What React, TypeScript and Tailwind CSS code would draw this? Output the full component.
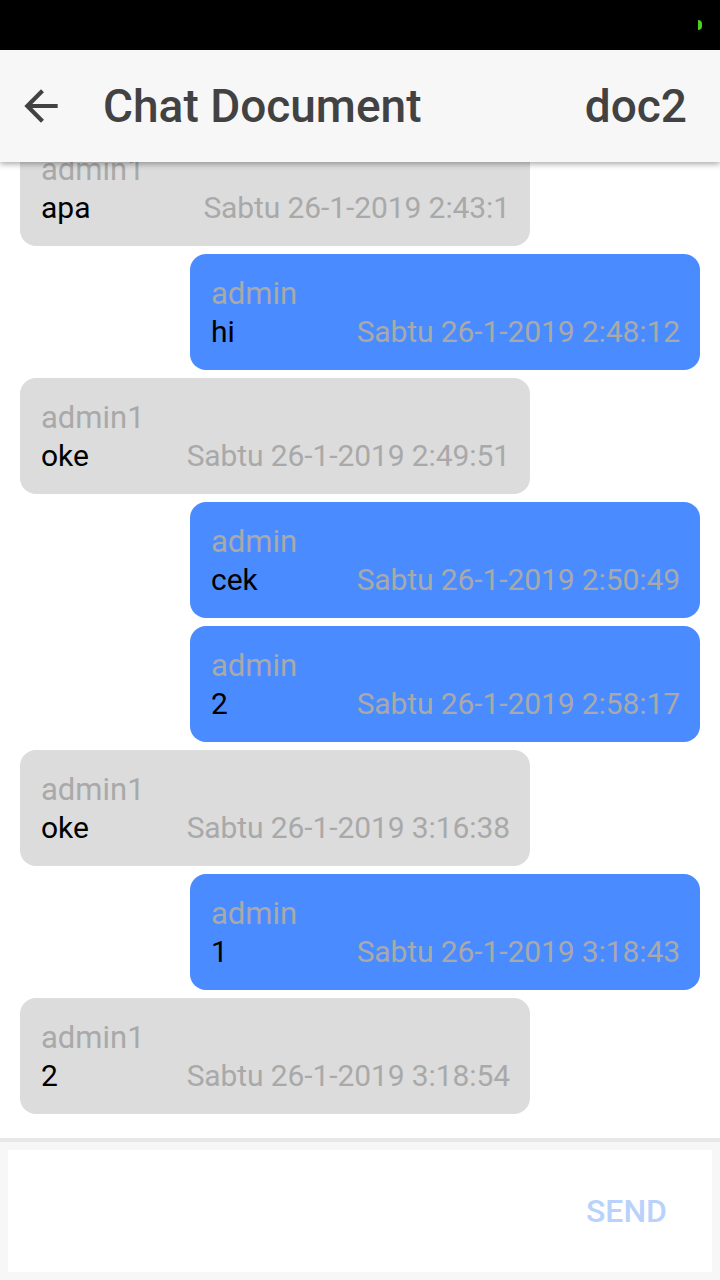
import React from "react";

type Msg = { from: string; text: string; time: string; mine: boolean };

const messages: Msg[] = [
  { from: "admin1", text: "apa", time: "Sabtu 26-1-2019 2:43:1", mine: false },
  { from: "admin", text: "hi", time: "Sabtu 26-1-2019 2:48:12", mine: true },
  { from: "admin1", text: "oke", time: "Sabtu 26-1-2019 2:49:51", mine: false },
  { from: "admin", text: "cek", time: "Sabtu 26-1-2019 2:50:49", mine: true },
  { from: "admin", text: "2", time: "Sabtu 26-1-2019 2:58:17", mine: true },
  { from: "admin1", text: "oke", time: "Sabtu 26-1-2019 3:16:38", mine: false },
  { from: "admin", text: "1", time: "Sabtu 26-1-2019 3:18:43", mine: true },
  { from: "admin1", text: "2", time: "Sabtu 26-1-2019 3:18:54", mine: false },
];

function Bubble({ m }: { m: Msg }) {
  return (
    <div className={"flex " + (m.mine ? "justify-end" : "justify-start")}>
      <div
        className={
          "w-[510px] h-[116px] shrink-0 rounded-[16px] pl-[21px] pr-[20px] pt-[21px] text-[30px] leading-[38px] " +
          (m.mine ? "bg-[#4a8cff]" : "bg-[#dcdcdc]")
        }
      >
        <div className="text-[#a9a9a9] text-[31px]">{m.from}</div>
        <div className="flex justify-between items-baseline">
          <span className="text-black">{m.text}</span>
          <span className="text-[#a9a9a9] tracking-[-0.1px]">{m.time}</span>
        </div>
      </div>
    </div>
  );
}

export default function App() {
  return (
    <div
      className="w-[720px] h-[1280px] flex flex-col bg-white overflow-hidden"
      style={{ fontFamily: "Roboto, 'Noto Sans', sans-serif" }}
    >
      <div className="h-[50px] bg-black flex items-center justify-end pr-[18px] shrink-0">
        <div className="w-[4px] h-[10px] rounded-r-full bg-[#4cd01c]" />
      </div>

      <div className="relative z-10 h-[112px] shrink-0 bg-[#f7f7f7] shadow-[0_2px_6px_rgba(0,0,0,0.35)] flex items-center pl-[16px] pr-[33px]">
        <svg width="50" height="50" viewBox="0 0 24 24" className="text-[#424242]">
          <path
            d="M20 11H7.83l5.59-5.59L12 4l-8 8 8 8 1.41-1.41L7.83 13H20v-2z"
            fill="currentColor"
          />
        </svg>
        <div className="ml-[37px] text-[46px] font-medium text-[#424242]">Chat Document</div>
        <div className="ml-auto text-[46px] font-medium text-[#424242]">doc2</div>
      </div>

      <div className="flex-1 min-h-0 overflow-hidden flex flex-col justify-end gap-[8px] px-[20px] pb-[24px]">
        {messages.map((m, i) => (
          <Bubble key={i} m={m} />
        ))}
      </div>

      <div className="h-[4px] bg-[#e8e8e8] shrink-0" />
      <div className="h-[138px] shrink-0 bg-[#f7f7f7] p-[8px]">
        <div className="h-full bg-white flex items-center justify-end pr-[45px]">
          <span className="text-[32px] font-medium text-[#b9d2fc]">SEND</span>
        </div>
      </div>
    </div>
  );
}
